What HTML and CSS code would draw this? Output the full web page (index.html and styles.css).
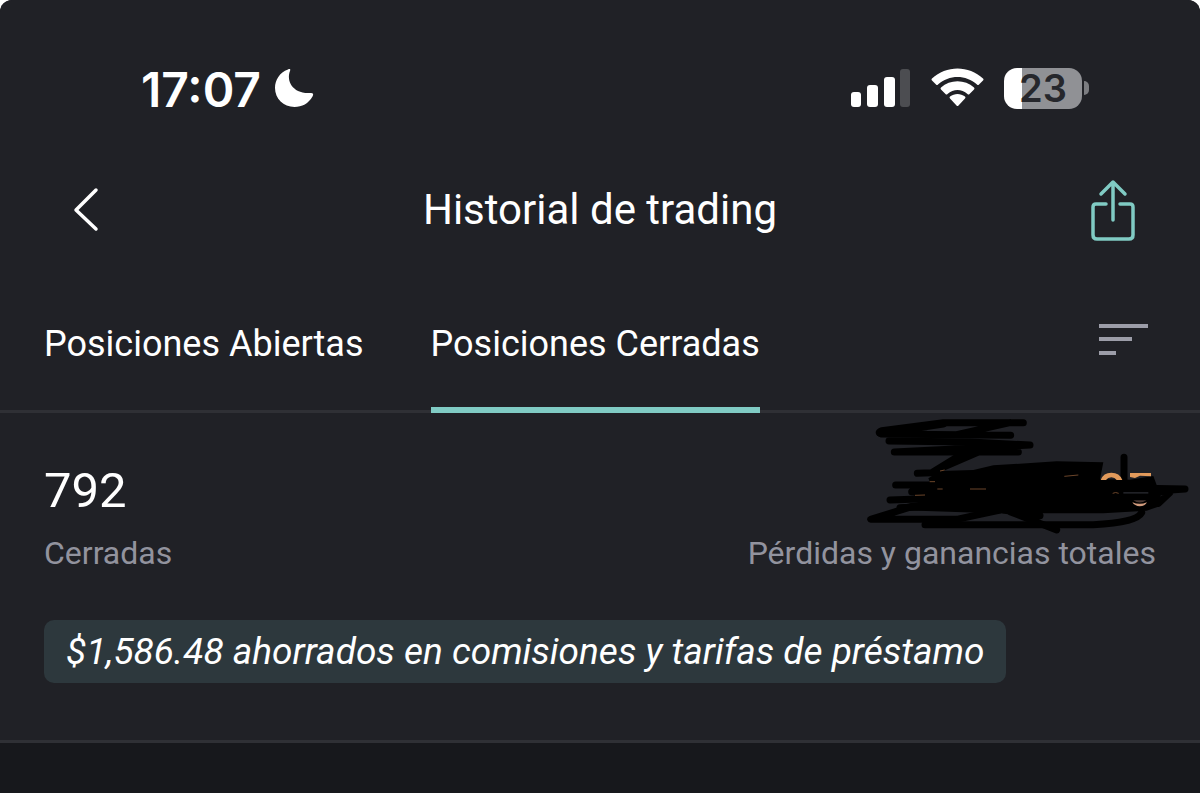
FILE: index.html
```html
<!DOCTYPE html>
<html lang="es">
<head>
    <meta charset="UTF-8">
    <meta name="viewport" content="width=device-width, initial-scale=1.0">
    <title>Historial de trading</title>
    <link rel="stylesheet" href="styles.css">
</head>
<body>
    <div class="screen">
        <div class="status-bar">
            <div class="status-left">
                <span class="time">17:07</span>
                <svg class="moon" width="40" height="40" viewBox="0 0 40 40" aria-hidden="true">
                    <path d="M14 1.5C15.500 0.500 17 1 16 3C12 13 19 26 36 25C39 24.500 40 26 38.500 28.500C34.500 35.500 28 39 20.500 39C9.500 39 1 30.500 1 20C1 12 5.500 4.500 14 1.500Z" fill="#fff"/>
                </svg>
            </div>
            <div class="status-right">
                <svg width="60" height="38" viewBox="0 0 60 38" aria-hidden="true">
                    <rect x="1" y="23" width="10" height="15" rx="3" fill="#fff"/>
                    <rect x="17" y="16" width="11" height="22" rx="3" fill="#fff"/>
                    <rect x="34" y="8" width="11" height="30" rx="3" fill="#fff"/>
                    <rect x="50" y="0" width="10" height="38" rx="3" fill="#4c4d51"/>
                </svg>
                <svg width="54" height="40" viewBox="0 0 54 40" aria-hidden="true">
                    <path d="M2 12.500Q1 11.500 2 10.500C16 -3 39 -3 53 10.500Q54 11.500 53 12.500L49 16.500Q48 17.500 47 16.500C36 6.500 19 6.500 8 16.500Q7 17.500 6 16.500Z" fill="#fff"/>
                    <path d="M11 21.500Q10 20.500 11 19.500C20 11 35 11 44 19.500Q45 20.500 44 21.500L39.500 26Q38.500 27 37.500 26C31.500 20.500 23.500 20.500 17.500 26Q16.500 27 15.500 26Z" fill="#fff"/>
                    <path d="M20 30.500Q19 29.500 20 28.500C24.500 25 30.500 25 35 28.500Q36 29.500 35 30.500L28.500 37.500Q27.500 38.500 26.500 37.500Z" fill="#fff"/>
                </svg>
                <div class="battery">
                    <span class="battery-body">23</span>
                    <span class="battery-cap"></span>
                </div>
            </div>
        </div>

        <header class="title-bar">
            <button class="icon-btn back" aria-label="Volver">
                <svg width="30" height="46" viewBox="0 0 30 46">
                    <path d="M26 3L6 23L26 42" fill="none" stroke="#fff" stroke-width="3.500" stroke-linecap="round" stroke-linejoin="round"/>
                </svg>
            </button>
            <h1>Historial de trading</h1>
            <button class="icon-btn share" aria-label="Compartir">
                <svg width="44" height="62" viewBox="0 0 44 62">
                    <path d="M15 25H5Q2 25 2 28V56Q2 60 6 60H38Q42 60 42 56V28Q42 25 39 25H29M22 41V3M10 15L22 3L34 15" fill="none" stroke="#80cbc4" stroke-width="3.500" stroke-linecap="round" stroke-linejoin="round"/>
                </svg>
            </button>
        </header>

        <nav class="tabs">
            <button class="tab">Posiciones Abiertas</button>
            <button class="tab active">Posiciones Cerradas</button>
            <button class="icon-btn filter" aria-label="Ordenar">
                <svg width="50" height="32" viewBox="0 0 50 32">
                    <path d="M0 2H49M0 15H33M0 29H17" fill="none" stroke="#9c9da8" stroke-width="4"/>
                </svg>
            </button>
        </nav>

        <main class="summary">
            <div class="totals">
                <div>
                    <p class="count">792</p>
                    <p class="label">Cerradas</p>
                </div>
                <div class="profit">
                    <p class="label">Pérdidas y ganancias totales</p>
                </div>
                <svg class="scribble" width="340" height="130" viewBox="0 0 1020 390" aria-hidden="true">
                    <g fill="none" stroke="#000" stroke-width="21" stroke-linecap="round" stroke-linejoin="round">
                        <path d="M490 38H250L65 62Q50 68 65 72L452 76L290 74L450 38"/>
                        <path d="M60 69L200 50L250 42"/>
                        <path d="M87 93L330 96L510 105L390 112L103 126H475"/>
                        <path d="M330 103L310 130L215 188L172 190M230 180L350 128"/>
                        <path d="M107 225H330M155 245H330M90 270L330 262M120 293L330 285"/>
                        <path d="M155 290L32 328H290L420 300"/>
                        <path d="M195 344H700Q830 338 845 308"/>
                        <path d="M450 305L590 360M430 300L540 317"/>
                        <path d="M792 142V215M810 234L975 237L890 243L930 247L895 280"/>
                    </g>
                    <path d="M205 205L240 183L340 180L400 166L590 154L730 157L720 208L810 209L880 198L890 225L905 245L895 290L860 302L730 310L400 310L110 300L115 286L200 272L160 255L155 240L215 230Z" fill="#000"/>
                    <path d="M722 210Q730 188 754 188Q779 188 787 210H770Q765 202 754 202Q743 202 738 210ZM810 189H873V199L840 197L825 204L810 201Z" fill="#e29a5b"/>
                    <path d="M758 250Q767 245 776 250M165 256L195 255M330 237H378M232 237H248M613 199L655 195M240 183L254 180M209 215H225" fill="none" stroke="#6b452a" stroke-width="3"/>
                    <path d="M817 277Q839 286 861 277Q855 289 839 289Q824 288 817 277Z" fill="#d09a7c"/>
                    <path d="M820 271H859Q839 284 820 271Z" fill="#4a3833"/>
                    <path d="M790 246H865V251H790Z" fill="#202126"/>
                </svg>
            </div>
            <p class="savings">$1,586.48 ahorrados en comisiones y tarifas de préstamo</p>
        </main>
    </div>
</body>
</html>
```
FILE: styles.css
```css
* {
    box-sizing: border-box;
}
body {
    margin: 0;
    background-color: #fff;
    color: #fff;
    font-family: Roboto, "Noto Sans", sans-serif;
}
.screen {
    min-height: 100vh;
    background-color: #17181c;
    border-radius: 12px 12px 0 0;
    overflow: hidden;
}
.status-bar,
.title-bar,
.tabs,
.summary {
    background-color: #202126;
}
h1,
p {
    margin: 0;
    font-weight: 400;
}
button {
    padding: 0;
    border: none;
    background: none;
    color: inherit;
    font: inherit;
    cursor: pointer;
}
svg {
    display: block;
}

/* Status bar */
.status-bar {
    display: flex;
    justify-content: space-between;
    align-items: center;
    height: 144px;
    padding: 32px 111px 0 141px;
    font-family: Inter, sans-serif;
    font-weight: 600;
}
.status-left,
.status-right,
.battery {
    display: flex;
    align-items: center;
}
.status-left {
    gap: 13px;
}
.time {
    padding-top: 4px;
    font-size: 48px;
    line-height: 56px;
}
.status-right {
    gap: 20px;
}
.battery {
    gap: 2px;
}
.battery-body {
    width: 78px;
    border-radius: 13px;
    background: linear-gradient(to right, #fff 18px, #909195 18px);
    color: #26272c;
    font-size: 38px;
    line-height: 41px;
    text-align: center;
}
.battery-cap {
    width: 5px;
    height: 14px;
    border-radius: 0 5px 5px 0;
    background-color: #7c7d81;
}

/* Title bar */
.title-bar {
    display: grid;
    grid-template-columns: 1fr auto 1fr;
    align-items: center;
    height: 132px;
    padding: 0 65px 0 70px;
}
.title-bar h1 {
    margin-right: 5px;
    font-size: 42px;
    line-height: 48px;
}
.icon-btn {
    display: block;
}
.share {
    justify-self: end;
}

/* Tabs */
.tabs {
    display: flex;
    gap: 67px;
    height: 137px;
    padding: 0 51px 0 44px;
    box-shadow: inset 0 -3px #2f3035;
}
.tab {
    padding-top: 4px;
    border-bottom: 6px solid transparent;
    font-size: 36px;
    line-height: 48px;
}
.tab.active {
    border-bottom-color: #80cbc4;
}
.filter {
    margin-left: auto;
    padding-bottom: 10px;
}

/* Summary */
.summary {
    padding: 48px 44px 57px;
    border-bottom: 3px solid #2f3035;
}
.totals {
    position: relative;
    display: flex;
    justify-content: space-between;
    align-items: flex-end;
}
.count {
    font-size: 49px;
    line-height: 60px;
}
.label {
    color: #92939e;
    font-size: 32px;
    line-height: 64px;
}
.scribble {
    position: absolute;
    top: -51px;
    right: -44px;
}
.savings {
    width: fit-content;
    margin-top: 35px;
    padding: 0 22px;
    border-radius: 10px;
    background-color: #2d383d;
    font-size: 37px;
    font-style: italic;
    line-height: 63px;
}
```
